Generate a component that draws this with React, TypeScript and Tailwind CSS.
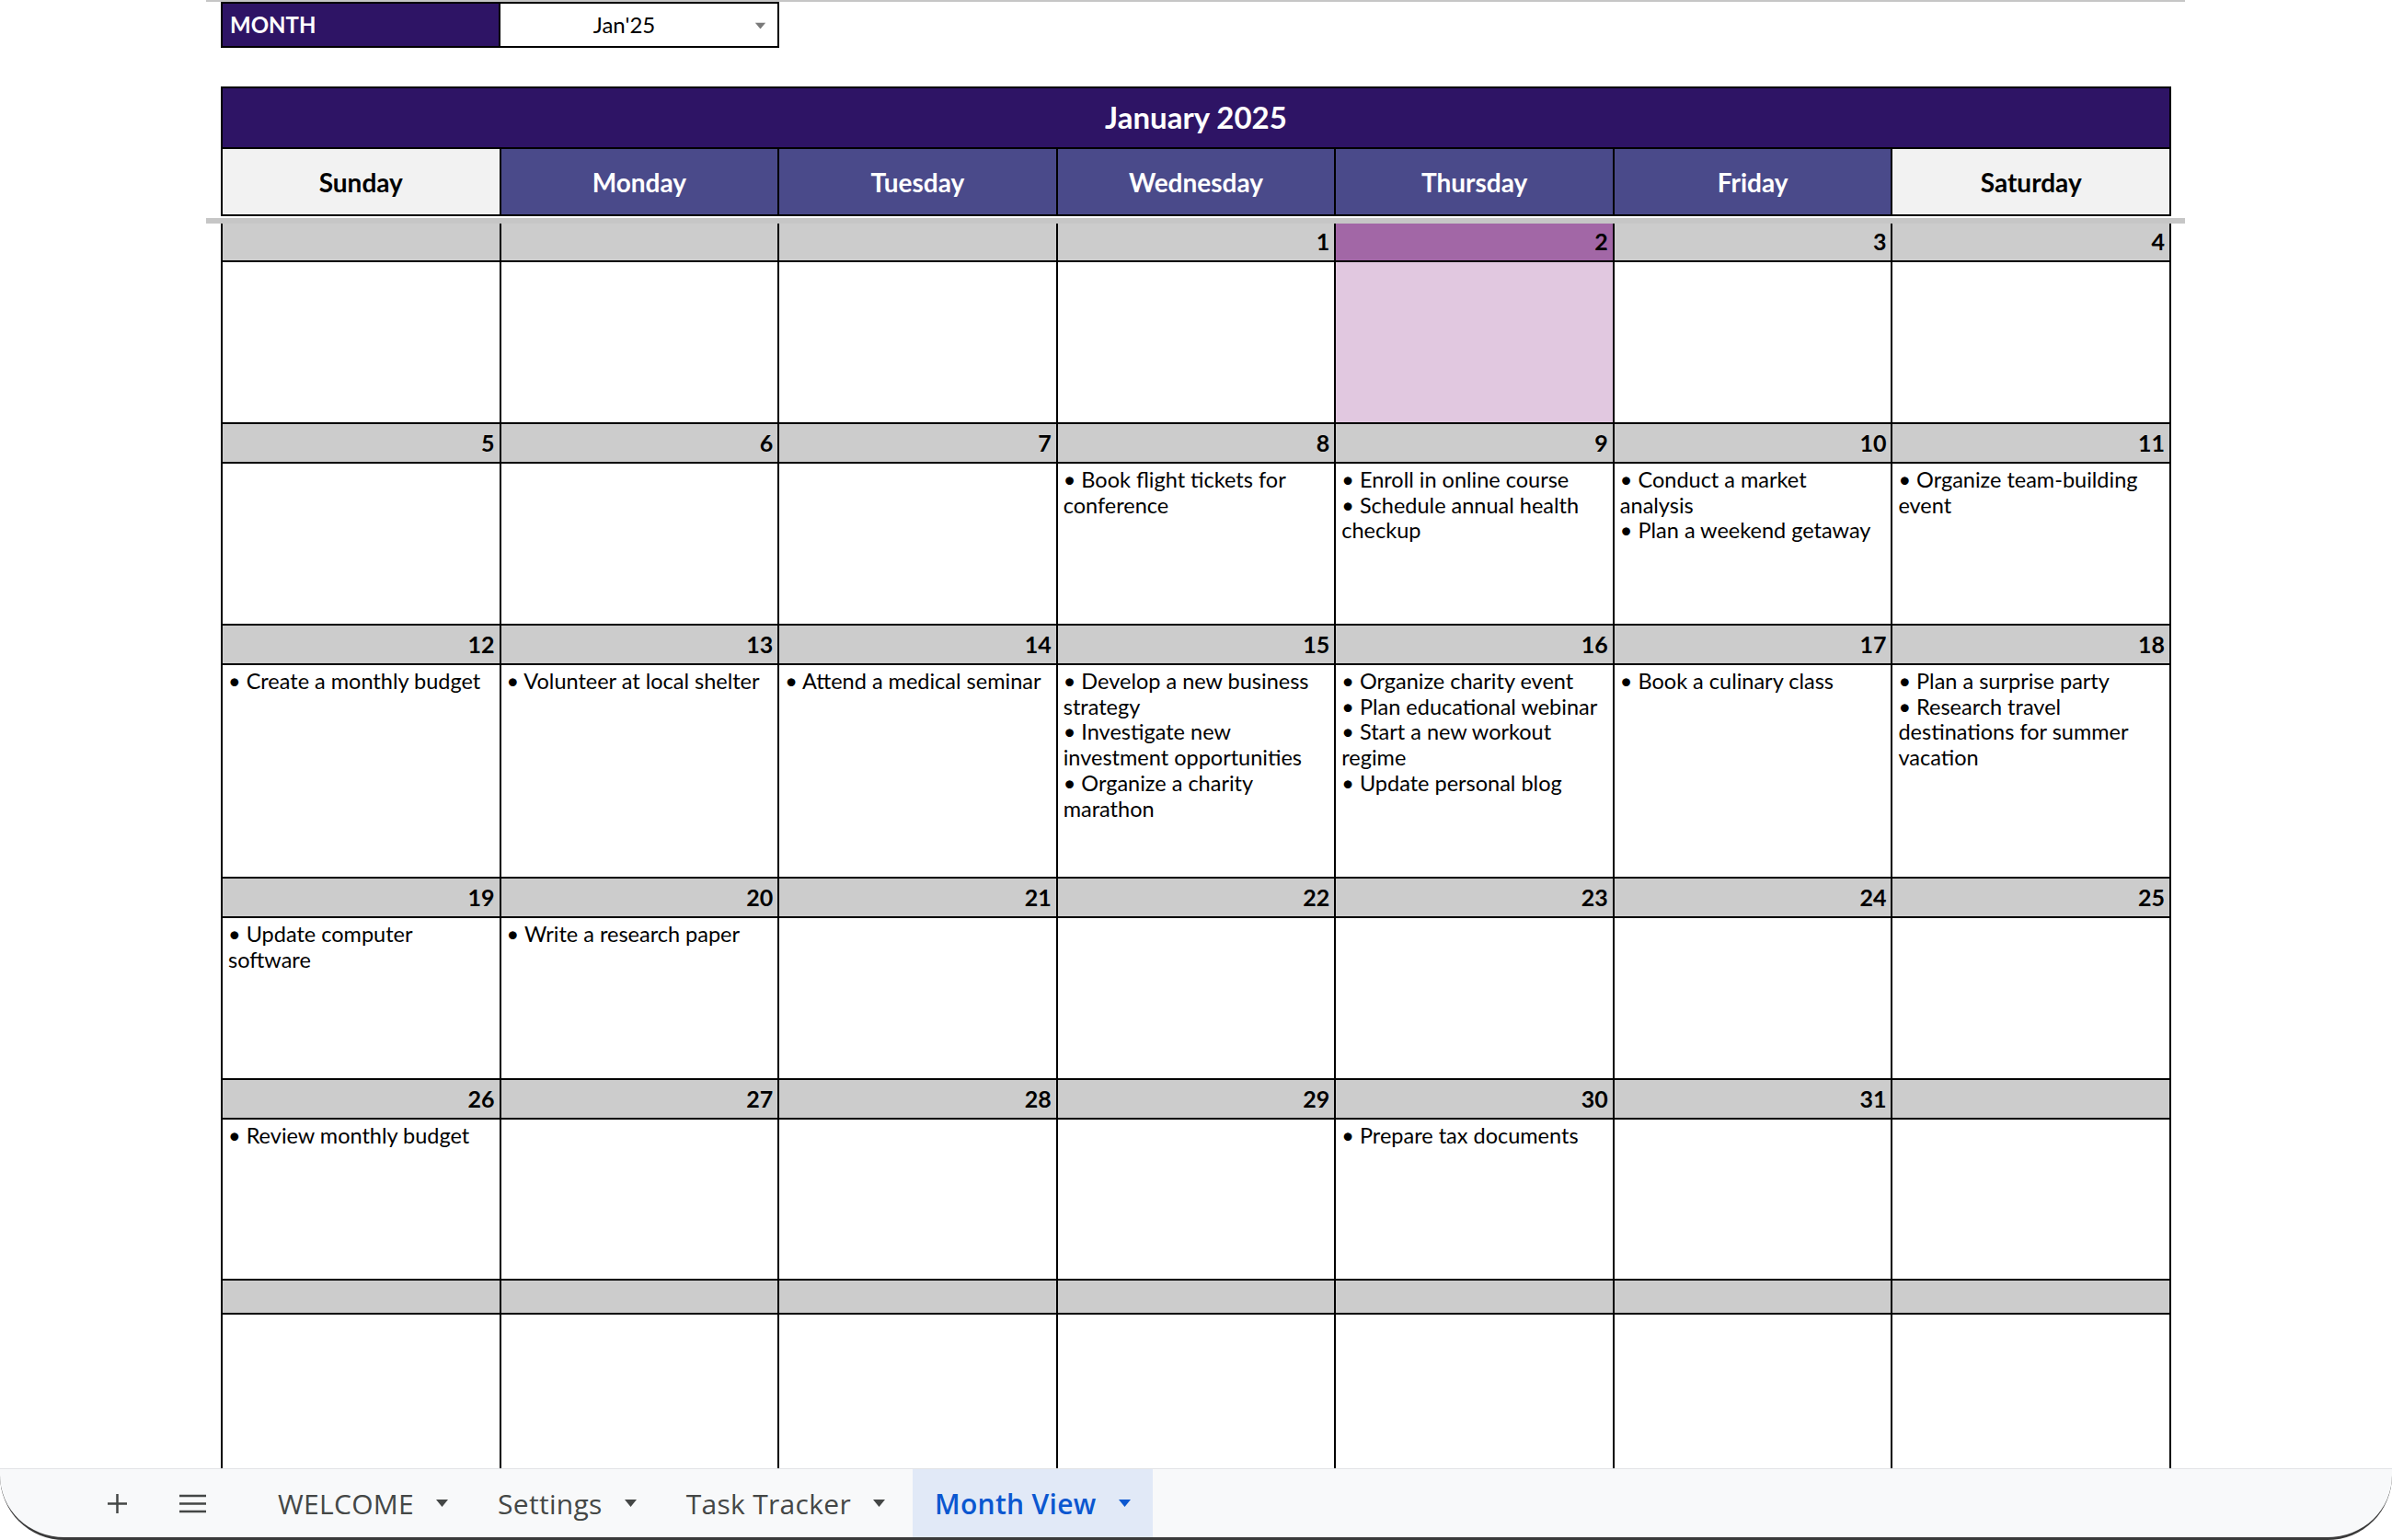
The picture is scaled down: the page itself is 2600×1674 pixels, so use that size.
import React from 'react'

type Cell = { n?: number; items?: string[][]; today?: boolean }
type Week = { dateH: number; bodyH: number; cells: Cell[] }

const weeks: Week[] = [
  {
    dateH: 42,
    bodyH: 176,
    cells: [{}, {}, {}, { n: 1 }, { n: 2, today: true }, { n: 3 }, { n: 4 }],
  },
  {
    dateH: 43,
    bodyH: 176,
    cells: [
      { n: 5 },
      { n: 6 },
      { n: 7 },
      { n: 8, items: [['Book flight tickets for', 'conference']] },
      { n: 9, items: [['Enroll in online course'], ['Schedule annual health', 'checkup']] },
      { n: 10, items: [['Conduct a market', 'analysis'], ['Plan a weekend getaway']] },
      { n: 11, items: [['Organize team-building', 'event']] },
    ],
  },
  {
    dateH: 43,
    bodyH: 232,
    cells: [
      { n: 12, items: [['Create a monthly budget']] },
      { n: 13, items: [['Volunteer at local shelter']] },
      { n: 14, items: [['Attend a medical seminar']] },
      {
        n: 15,
        items: [
          ['Develop a new business', 'strategy'],
          ['Investigate new', 'investment opportunities'],
          ['Organize a charity', 'marathon'],
        ],
      },
      {
        n: 16,
        items: [
          ['Organize charity event'],
          ['Plan educational webinar'],
          ['Start a new workout', 'regime'],
          ['Update personal blog'],
        ],
      },
      { n: 17, items: [['Book a culinary class']] },
      {
        n: 18,
        items: [['Plan a surprise party'], ['Research travel', 'destinations for summer', 'vacation']],
      },
    ],
  },
  {
    dateH: 43,
    bodyH: 176,
    cells: [
      { n: 19, items: [['Update computer', 'software']] },
      { n: 20, items: [['Write a research paper']] },
      { n: 21 },
      { n: 22 },
      { n: 23 },
      { n: 24 },
      { n: 25 },
    ],
  },
  {
    dateH: 43,
    bodyH: 175,
    cells: [
      { n: 26, items: [['Review monthly budget']] },
      { n: 27 },
      { n: 28 },
      { n: 29 },
      { n: 30, items: [['Prepare tax documents']] },
      { n: 31 },
      {},
    ],
  },
  {
    dateH: 37,
    bodyH: 260,
    cells: [{}, {}, {}, {}, {}, {}, {}],
  },
]

const days = ['Sunday', 'Monday', 'Tuesday', 'Wednesday', 'Thursday', 'Friday', 'Saturday']

function Caret({ className }: { className?: string }) {
  return (
    <svg className={className} width="13" height="8" viewBox="0 0 13 8">
      <polygon points="0,0 13,0 6.5,8" fill="currentColor" />
    </svg>
  )
}

function WeekRow({ week }: { week: Week }) {
  return (
    <div className="w-[2120px] border-l-2 border-black">
      {/* date numbers */}
      <div className="grid grid-cols-7" style={{ height: week.dateH }}>
        {week.cells.map((c, i) => (
          <div
            key={i}
            className={`flex items-center justify-end pr-[5px] border-r-2 border-b-2 border-black text-[25px] font-bold text-black ${
              c.today ? 'bg-[#a267a6]' : 'bg-[#cccccc]'
            }`}
          >
            {c.n}
          </div>
        ))}
      </div>
      {/* tasks */}
      <div className="grid grid-cols-7" style={{ height: week.bodyH }}>
        {week.cells.map((c, i) => (
          <div
            key={i}
            className={`px-[6px] pt-[4px] border-r-2 border-b-2 border-black text-[23.5px] leading-[27.7px] text-black overflow-hidden ${
              c.today ? 'bg-[#e1c8e0]' : 'bg-white'
            }`}
          >
            {c.items?.map((item, j) =>
              item.map((line, k) => (
                <div key={`${j}-${k}`} className="whitespace-nowrap">
                  {k === 0 ? `• ${line}` : line}
                </div>
              ))
            )}
          </div>
        ))}
      </div>
    </div>
  )
}

export default function App() {
  return (
    <div className="w-[2600px] h-[1674px] bg-white overflow-hidden flex flex-col font-['Lato',sans-serif]">
      <div className="flex-1 min-h-0 overflow-hidden">
        {/* frozen top line */}
        <div className="ml-[224px] w-[2151px] h-[2px] bg-[#c6c6c6]" />

        {/* month selector */}
        <div className="ml-[240px] flex h-[50px]">
          <div className="w-[304px] flex items-center pl-[8px] bg-[#2e1465] border-2 border-black text-white font-bold text-[24px]">
            MONTH
          </div>
          <div className="w-[303px] relative flex items-center justify-center pr-[32px] bg-white border-2 border-l-0 border-black text-[24px] text-black">
            Jan'25
            <Caret className="absolute right-[12px] top-[20px] text-[#7a7a7a] scale-90" />
          </div>
        </div>

        <div className="h-[42px]" />

        {/* title + weekday header */}
        <div className="ml-[240px] w-[2120px]">
          <div className="h-[68px] flex items-center justify-center bg-[#2e1465] border-2 border-black text-white font-bold text-[33px]">
            January 2025
          </div>
          <div className="grid grid-cols-7 h-[73px] border-l-2 border-b-2 border-black">
            {days.map((d, i) => (
              <div
                key={d}
                className={`flex items-center justify-center border-r-2 border-black font-bold text-[28px] ${
                  i === 0 || i === 6 ? 'bg-[#f2f2f2] text-black' : 'bg-[#4a4a8a] text-white'
                }`}
              >
                {d}
              </div>
            ))}
          </div>
        </div>

        {/* frozen rows divider */}
        <div className="h-[2px]" />
        <div className="ml-[224px] w-[2151px] h-[6px] bg-[#c6c6c6]" />

        {/* calendar weeks */}
        <div className="ml-[240px]">
          {weeks.map((w, i) => (
            <WeekRow key={i} week={w} />
          ))}
        </div>
      </div>

      {/* sheet tabs */}
      <div className="h-[78px] shrink-0 flex items-stretch bg-[#f8f9fa] border-t border-[#e1e3e6] border-b-[3px] border-b-[#3a3a3a] rounded-b-[70px] pl-[117px] font-['Open_Sans',sans-serif] text-[#444746]">
        <div className="flex items-center">
          <svg width="21" height="21" viewBox="0 0 21 21">
            <path d="M10.5 0v21M0 10.5h21" stroke="#444746" strokeWidth="2.5" />
          </svg>
        </div>
        <div className="flex items-center ml-[57px]">
          <svg width="29" height="21" viewBox="0 0 29 21">
            <path d="M0 2h29M0 10.5h29M0 19h29" stroke="#444746" strokeWidth="2.6" />
          </svg>
        </div>
        <div className="flex items-stretch ml-[54px] gap-[6px]">
          {['WELCOME', 'Settings', 'Task Tracker'].map((t) => (
            <div key={t} className="flex items-center gap-[24px] px-[24px] text-[30px] font-medium tracking-[0.3px]">
              {t}
              <Caret />
            </div>
          ))}
          <div className="flex items-center gap-[24px] px-[24px] bg-[#e1e9f7] text-[#0b57d0] text-[30px] font-semibold tracking-[0.3px]">
            Month View
            <Caret />
          </div>
        </div>
      </div>
    </div>
  )
}
